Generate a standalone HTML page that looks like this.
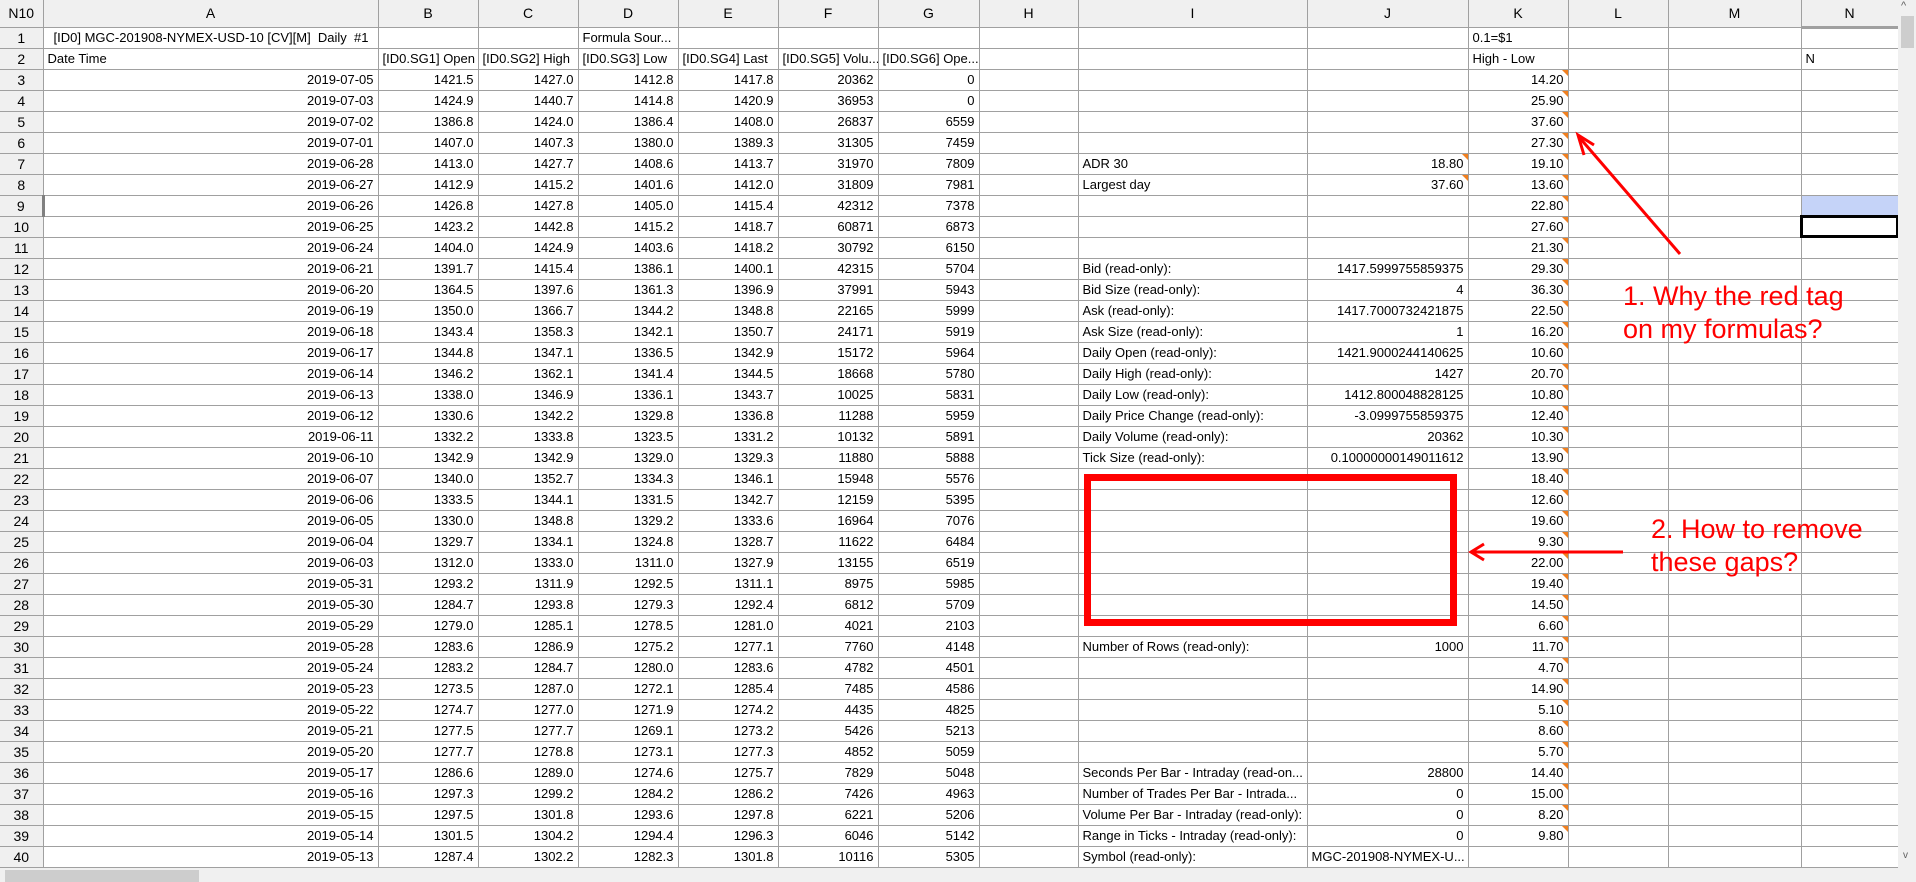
<!DOCTYPE html>
<html><head><meta charset="utf-8"><style>
*{margin:0;padding:0;box-sizing:border-box}
body{width:1916px;height:882px;overflow:hidden;background:#fff;font-family:"Liberation Sans",sans-serif;font-size:13px;color:#000;position:relative}
table{border-collapse:collapse;table-layout:fixed;position:absolute;left:0;top:0;width:1898px}
td,th{height:21px;border-right:1px solid #a0a0a0;border-bottom:1px solid #a0a0a0;padding:0 4px;white-space:nowrap;overflow:hidden;font-weight:normal;position:relative;line-height:20px}
thead th{height:27px;background:#f0f0f0;text-align:center;font-size:14px}
tbody th{background:#f0f0f0;text-align:center;padding:0;font-size:14px}
td{text-align:right}
td.l{text-align:left}
td.t::after{content:"";position:absolute;right:0;top:0;border-top:6px solid #f08020;border-left:6px solid transparent}
.vs{position:absolute;left:1898px;top:0;width:18px;height:868px;background:#f0f0f0}
.vt{position:absolute;left:1901px;top:16px;width:13px;height:32px;background:#cdcdcd}
.hs{position:absolute;left:0;top:868px;width:1916px;height:14px;background:#f0f0f0}
.ht{position:absolute;left:5px;top:870px;width:194px;height:12px;background:#cdcdcd}
svg{position:absolute;left:0;top:0}
</style></head><body>
<table>
<colgroup><col style="width:43px"><col style="width:335px"><col style="width:100px"><col style="width:100px"><col style="width:100px"><col style="width:100px"><col style="width:100px"><col style="width:101px"><col style="width:99px"><col style="width:229px"><col style="width:161px"><col style="width:100px"><col style="width:100px"><col style="width:133px"><col style="width:97px"></colgroup>
<thead><tr><th>N10</th><th>A</th><th>B</th><th>C</th><th>D</th><th>E</th><th>F</th><th>G</th><th>H</th><th>I</th><th>J</th><th>K</th><th>L</th><th>M</th><th style="border-bottom:3px solid #a0a0a0">N</th></tr></thead>
<tbody>
<tr><th>1</th><td class="l" style="padding-left:10px">[ID0] MGC-201908-NYMEX-USD-10 [CV][M]&nbsp; Daily&nbsp; #1</td><td></td><td></td><td class="l">Formula Sour...</td><td></td><td></td><td></td><td></td><td></td><td></td><td class="l">0.1=$1</td><td></td><td></td><td></td></tr>
<tr><th>2</th><td class="l">Date Time</td><td class="l">[ID0.SG1] Open</td><td class="l">[ID0.SG2] High</td><td class="l">[ID0.SG3] Low</td><td class="l">[ID0.SG4] Last</td><td class="l">[ID0.SG5] Volu...</td><td class="l">[ID0.SG6] Ope...</td><td></td><td></td><td></td><td class="l">High - Low</td><td></td><td></td><td class="l">N</td></tr>
<tr><th>3</th><td>2019-07-05</td><td>1421.5</td><td>1427.0</td><td>1412.8</td><td>1417.8</td><td>20362</td><td>0</td><td></td><td></td><td></td><td class="t">14.20</td><td></td><td></td><td></td></tr>
<tr><th>4</th><td>2019-07-03</td><td>1424.9</td><td>1440.7</td><td>1414.8</td><td>1420.9</td><td>36953</td><td>0</td><td></td><td></td><td></td><td class="t">25.90</td><td></td><td></td><td></td></tr>
<tr><th>5</th><td>2019-07-02</td><td>1386.8</td><td>1424.0</td><td>1386.4</td><td>1408.0</td><td>26837</td><td>6559</td><td></td><td></td><td></td><td class="t">37.60</td><td></td><td></td><td></td></tr>
<tr><th>6</th><td>2019-07-01</td><td>1407.0</td><td>1407.3</td><td>1380.0</td><td>1389.3</td><td>31305</td><td>7459</td><td></td><td></td><td></td><td class="t">27.30</td><td></td><td></td><td></td></tr>
<tr><th>7</th><td>2019-06-28</td><td>1413.0</td><td>1427.7</td><td>1408.6</td><td>1413.7</td><td>31970</td><td>7809</td><td></td><td class="l">ADR 30</td><td class="t">18.80</td><td class="t">19.10</td><td></td><td></td><td></td></tr>
<tr><th>8</th><td>2019-06-27</td><td>1412.9</td><td>1415.2</td><td>1401.6</td><td>1412.0</td><td>31809</td><td>7981</td><td></td><td class="l">Largest day</td><td class="t">37.60</td><td class="t">13.60</td><td></td><td></td><td></td></tr>
<tr><th style="border-right:3px solid #808080">9</th><td>2019-06-26</td><td>1426.8</td><td>1427.8</td><td>1405.0</td><td>1415.4</td><td>42312</td><td>7378</td><td></td><td></td><td></td><td class="t">22.80</td><td></td><td></td><td style="background:#c5d3f8"></td></tr>
<tr><th>10</th><td>2019-06-25</td><td>1423.2</td><td>1442.8</td><td>1415.2</td><td>1418.7</td><td>60871</td><td>6873</td><td></td><td></td><td></td><td class="t">27.60</td><td></td><td></td><td style="outline:3px solid #000;outline-offset:-2px"></td></tr>
<tr><th>11</th><td>2019-06-24</td><td>1404.0</td><td>1424.9</td><td>1403.6</td><td>1418.2</td><td>30792</td><td>6150</td><td></td><td></td><td></td><td class="t">21.30</td><td></td><td></td><td></td></tr>
<tr><th>12</th><td>2019-06-21</td><td>1391.7</td><td>1415.4</td><td>1386.1</td><td>1400.1</td><td>42315</td><td>5704</td><td></td><td class="l">Bid (read-only):</td><td>1417.5999755859375</td><td class="t">29.30</td><td></td><td></td><td></td></tr>
<tr><th>13</th><td>2019-06-20</td><td>1364.5</td><td>1397.6</td><td>1361.3</td><td>1396.9</td><td>37991</td><td>5943</td><td></td><td class="l">Bid Size (read-only):</td><td>4</td><td class="t">36.30</td><td></td><td></td><td></td></tr>
<tr><th>14</th><td>2019-06-19</td><td>1350.0</td><td>1366.7</td><td>1344.2</td><td>1348.8</td><td>22165</td><td>5999</td><td></td><td class="l">Ask (read-only):</td><td>1417.7000732421875</td><td class="t">22.50</td><td></td><td></td><td></td></tr>
<tr><th>15</th><td>2019-06-18</td><td>1343.4</td><td>1358.3</td><td>1342.1</td><td>1350.7</td><td>24171</td><td>5919</td><td></td><td class="l">Ask Size (read-only):</td><td>1</td><td class="t">16.20</td><td></td><td></td><td></td></tr>
<tr><th>16</th><td>2019-06-17</td><td>1344.8</td><td>1347.1</td><td>1336.5</td><td>1342.9</td><td>15172</td><td>5964</td><td></td><td class="l">Daily Open (read-only):</td><td>1421.9000244140625</td><td class="t">10.60</td><td></td><td></td><td></td></tr>
<tr><th>17</th><td>2019-06-14</td><td>1346.2</td><td>1362.1</td><td>1341.4</td><td>1344.5</td><td>18668</td><td>5780</td><td></td><td class="l">Daily High (read-only):</td><td>1427</td><td class="t">20.70</td><td></td><td></td><td></td></tr>
<tr><th>18</th><td>2019-06-13</td><td>1338.0</td><td>1346.9</td><td>1336.1</td><td>1343.7</td><td>10025</td><td>5831</td><td></td><td class="l">Daily Low (read-only):</td><td>1412.800048828125</td><td class="t">10.80</td><td></td><td></td><td></td></tr>
<tr><th>19</th><td>2019-06-12</td><td>1330.6</td><td>1342.2</td><td>1329.8</td><td>1336.8</td><td>11288</td><td>5959</td><td></td><td class="l">Daily Price Change (read-only):</td><td>-3.0999755859375</td><td class="t">12.40</td><td></td><td></td><td></td></tr>
<tr><th>20</th><td>2019-06-11</td><td>1332.2</td><td>1333.8</td><td>1323.5</td><td>1331.2</td><td>10132</td><td>5891</td><td></td><td class="l">Daily Volume (read-only):</td><td>20362</td><td class="t">10.30</td><td></td><td></td><td></td></tr>
<tr><th>21</th><td>2019-06-10</td><td>1342.9</td><td>1342.9</td><td>1329.0</td><td>1329.3</td><td>11880</td><td>5888</td><td></td><td class="l">Tick Size (read-only):</td><td>0.10000000149011612</td><td class="t">13.90</td><td></td><td></td><td></td></tr>
<tr><th>22</th><td>2019-06-07</td><td>1340.0</td><td>1352.7</td><td>1334.3</td><td>1346.1</td><td>15948</td><td>5576</td><td></td><td></td><td></td><td class="t">18.40</td><td></td><td></td><td></td></tr>
<tr><th>23</th><td>2019-06-06</td><td>1333.5</td><td>1344.1</td><td>1331.5</td><td>1342.7</td><td>12159</td><td>5395</td><td></td><td></td><td></td><td class="t">12.60</td><td></td><td></td><td></td></tr>
<tr><th>24</th><td>2019-06-05</td><td>1330.0</td><td>1348.8</td><td>1329.2</td><td>1333.6</td><td>16964</td><td>7076</td><td></td><td></td><td></td><td class="t">19.60</td><td></td><td></td><td></td></tr>
<tr><th>25</th><td>2019-06-04</td><td>1329.7</td><td>1334.1</td><td>1324.8</td><td>1328.7</td><td>11622</td><td>6484</td><td></td><td></td><td></td><td class="t">9.30</td><td></td><td></td><td></td></tr>
<tr><th>26</th><td>2019-06-03</td><td>1312.0</td><td>1333.0</td><td>1311.0</td><td>1327.9</td><td>13155</td><td>6519</td><td></td><td></td><td></td><td class="t">22.00</td><td></td><td></td><td></td></tr>
<tr><th>27</th><td>2019-05-31</td><td>1293.2</td><td>1311.9</td><td>1292.5</td><td>1311.1</td><td>8975</td><td>5985</td><td></td><td></td><td></td><td class="t">19.40</td><td></td><td></td><td></td></tr>
<tr><th>28</th><td>2019-05-30</td><td>1284.7</td><td>1293.8</td><td>1279.3</td><td>1292.4</td><td>6812</td><td>5709</td><td></td><td></td><td></td><td class="t">14.50</td><td></td><td></td><td></td></tr>
<tr><th>29</th><td>2019-05-29</td><td>1279.0</td><td>1285.1</td><td>1278.5</td><td>1281.0</td><td>4021</td><td>2103</td><td></td><td></td><td></td><td class="t">6.60</td><td></td><td></td><td></td></tr>
<tr><th>30</th><td>2019-05-28</td><td>1283.6</td><td>1286.9</td><td>1275.2</td><td>1277.1</td><td>7760</td><td>4148</td><td></td><td class="l">Number of Rows (read-only):</td><td>1000</td><td class="t">11.70</td><td></td><td></td><td></td></tr>
<tr><th>31</th><td>2019-05-24</td><td>1283.2</td><td>1284.7</td><td>1280.0</td><td>1283.6</td><td>4782</td><td>4501</td><td></td><td></td><td></td><td class="t">4.70</td><td></td><td></td><td></td></tr>
<tr><th>32</th><td>2019-05-23</td><td>1273.5</td><td>1287.0</td><td>1272.1</td><td>1285.4</td><td>7485</td><td>4586</td><td></td><td></td><td></td><td class="t">14.90</td><td></td><td></td><td></td></tr>
<tr><th>33</th><td>2019-05-22</td><td>1274.7</td><td>1277.0</td><td>1271.9</td><td>1274.2</td><td>4435</td><td>4825</td><td></td><td></td><td></td><td class="t">5.10</td><td></td><td></td><td></td></tr>
<tr><th>34</th><td>2019-05-21</td><td>1277.5</td><td>1277.7</td><td>1269.1</td><td>1273.2</td><td>5426</td><td>5213</td><td></td><td></td><td></td><td class="t">8.60</td><td></td><td></td><td></td></tr>
<tr><th>35</th><td>2019-05-20</td><td>1277.7</td><td>1278.8</td><td>1273.1</td><td>1277.3</td><td>4852</td><td>5059</td><td></td><td></td><td></td><td class="t">5.70</td><td></td><td></td><td></td></tr>
<tr><th>36</th><td>2019-05-17</td><td>1286.6</td><td>1289.0</td><td>1274.6</td><td>1275.7</td><td>7829</td><td>5048</td><td></td><td class="l">Seconds Per Bar - Intraday (read-on...</td><td>28800</td><td class="t">14.40</td><td></td><td></td><td></td></tr>
<tr><th>37</th><td>2019-05-16</td><td>1297.3</td><td>1299.2</td><td>1284.2</td><td>1286.2</td><td>7426</td><td>4963</td><td></td><td class="l">Number of Trades Per Bar - Intrada...</td><td>0</td><td class="t">15.00</td><td></td><td></td><td></td></tr>
<tr><th>38</th><td>2019-05-15</td><td>1297.5</td><td>1301.8</td><td>1293.6</td><td>1297.8</td><td>6221</td><td>5206</td><td></td><td class="l">Volume Per Bar - Intraday (read-only):</td><td>0</td><td class="t">8.20</td><td></td><td></td><td></td></tr>
<tr><th>39</th><td>2019-05-14</td><td>1301.5</td><td>1304.2</td><td>1294.4</td><td>1296.3</td><td>6046</td><td>5142</td><td></td><td class="l">Range in Ticks - Intraday (read-only):</td><td>0</td><td class="t">9.80</td><td></td><td></td><td></td></tr>
<tr><th>40</th><td>2019-05-13</td><td>1287.4</td><td>1302.2</td><td>1282.3</td><td>1301.8</td><td>10116</td><td>5305</td><td></td><td class="l">Symbol (read-only):</td><td class="l">MGC-201908-NYMEX-U...</td><td></td><td></td><td></td><td></td></tr>
</tbody></table>
<div class="vs"></div><div class="vt"></div>
<div style="position:absolute;left:1901px;top:0;font-size:11px;color:#606060">^</div>
<div style="position:absolute;left:1903px;top:850px;font-size:10px;color:#606060">v</div>
<div class="hs"></div><div class="ht"></div>
<svg width="1916" height="882" viewBox="0 0 1916 882">
<rect x="1087.5" y="477.5" width="366" height="145" fill="none" stroke="#ff0000" stroke-width="7"/>
<line x1="1680" y1="254" x2="1579" y2="137" stroke="#ff0000" stroke-width="3"/>
<polyline points="1594,145 1578,135 1584,155" fill="none" stroke="#ff0000" stroke-width="3"/>
<line x1="1623" y1="552" x2="1472" y2="552" stroke="#ff0000" stroke-width="3"/>
<polyline points="1484,544 1471,552 1484,560" fill="none" stroke="#ff0000" stroke-width="3"/>
<g font-family="Liberation Sans, sans-serif" font-size="27" fill="#ff0000">
<text x="1623" y="305">1. Why the red tag</text>
<text x="1623" y="338">on my formulas?</text>
<text x="1651" y="538">2. How to remove</text>
<text x="1651" y="571">these gaps?</text>
</g>
</svg>
</body></html>
